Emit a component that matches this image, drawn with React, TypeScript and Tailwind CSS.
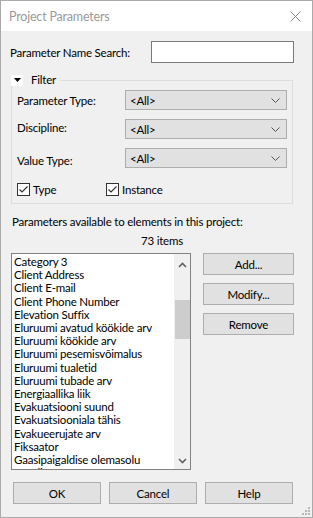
import React from "react";

const items = [
  "Category 3",
  "Client Address",
  "Client E-mail",
  "Client Phone Number",
  "Elevation Suffix",
  "Eluruumi avatud köökide arv",
  "Eluruumi köökide arv",
  "Eluruumi pesemisvõimalus",
  "Eluruumi tualetid",
  "Eluruumi tubade arv",
  "Energiaallika liik",
  "Evakuatsiooni suund",
  "Evakuatsiooniala tähis",
  "Evakueerujate arv",
  "Fiksaator",
  "Gaasipaigaldise olemasolu",
  "Heading",
];

function Chevron() {
  return (
    <svg width="9" height="5" viewBox="0 0 9 5" className="mr-[6px]">
      <path d="M0.5 0.5 L4.5 4.5 L8.5 0.5" fill="none" stroke="#555" strokeWidth="1" />
    </svg>
  );
}

function SelectBox() {
  return (
    <div className="w-[162px] h-[20px] bg-[#e1e1e1] border border-[#adadad] flex items-center justify-between pl-[4px]">
      <span>&lt;All&gt;</span>
      <Chevron />
    </div>
  );
}

function CheckBox({ label }: { label: string }) {
  return (
    <div className="flex items-center gap-[3px] h-[13px]">
      <div className="w-[13px] h-[13px] border border-[#333] bg-white flex items-center justify-center">
        <svg width="11" height="11" viewBox="0 0 11 11">
          <path d="M1.5 5.5 L4 8 L9.5 2.5" fill="none" stroke="#333" strokeWidth="1.2" />
        </svg>
      </div>
      <span>{label}</span>
    </div>
  );
}

function Btn({ label, w }: { label: string; w: string }) {
  return (
    <div className={`${w} h-[22px] shrink-0 bg-[#e1e1e1] border border-[#adadad] flex items-center justify-center`}>
      {label}
    </div>
  );
}

export default function App() {
  return (
    <div
      className="w-[313px] h-[518px] border border-t-0 border-[#aaaaaa] bg-[#f0f0f0] text-[11.5px] tracking-[-0.2px] leading-[15px] text-black flex flex-col overflow-hidden"
      style={{ fontFamily: 'Lato, "Liberation Sans", sans-serif' }}
    >
      {/* title bar */}
      <div className="h-[31px] shrink-0 bg-white flex items-center justify-between pl-[8px] pr-[11px] border-t border-[#aaaaaa]">
        <span className="text-[12.5px] text-[#9a9a9a]">Project Parameters</span>
        <svg width="11" height="11" viewBox="0 0 11 11">
          <path d="M0.5 0.5 L10.5 10.5 M10.5 0.5 L0.5 10.5" stroke="#8a8a8a" strokeWidth="1" />
        </svg>
      </div>

      <div className="flex flex-col pl-[9px] pr-[18px] shrink-0">
        {/* search row */}
        <div className="flex items-center justify-between mt-[10px] h-[22px]">
          <span>Parameter Name Search:</span>
          <div className="w-[143px] h-[22px] bg-white border border-[#7a7a7a]" />
        </div>

        {/* filter group */}
        <fieldset className="border border-[#dcdcdc] mt-[11px] ml-[1px] mr-[1px] px-[5px] pb-[7px]">
          <legend className="flex items-center gap-[8px] pr-[4px] ml-[-6px] h-[12px] leading-[12px] bg-[#f0f0f0]">
            <span className="w-[12px] h-[11px] bg-white flex items-center justify-center">
              <svg width="7" height="4" viewBox="0 0 7 4">
                <path d="M0 0 L7 0 L3.5 4 Z" fill="#000" />
              </svg>
            </span>
            <span>Filter</span>
          </legend>
          <div className="flex flex-col gap-[9px] mt-[4px]">
            <div className="flex items-center justify-between h-[20px]">
              <span>Parameter Type:</span>
              <SelectBox />
            </div>
            <div className="flex items-center justify-between h-[20px]">
              <span className="mb-[3px]">Discipline:</span>
              <SelectBox />
            </div>
            <div className="flex items-center justify-between h-[20px]">
              <span className="mt-[4px]">Value Type:</span>
              <SelectBox />
            </div>
          </div>
          <div className="flex mt-[15px]">
            <div className="w-[89px]">
              <CheckBox label="Type" />
            </div>
            <CheckBox label="Instance" />
          </div>
        </fieldset>

        <div className="mt-[10px] ml-[2px]">Parameters available to elements in this project:</div>
        <div className="mt-[4px] text-center pl-[20px]">73 items</div>

        {/* list + side buttons */}
        <div className="flex mt-[5px] ml-[1px]">
          <div className="w-[180px] h-[217px] bg-white border border-[#828282] flex overflow-hidden">
            <div className="flex-1 pl-[2px] pt-[1px] leading-[13.2px] overflow-hidden">
              {items.map((it) => (
                <div key={it} className="whitespace-nowrap">
                  {it}
                </div>
              ))}
            </div>
            <div className="w-[16px] bg-[#f0f0f0] flex flex-col items-center">
              <svg width="9" height="6" viewBox="0 0 9 6" className="mt-[8px]">
                <path d="M1 5 L4.5 1.5 L8 5" fill="none" stroke="#606060" strokeWidth="1.6" />
              </svg>
              <div className="w-[15px] h-[39px] bg-[#cdcdcd] mt-[32px]" />
              <div className="flex-1" />
              <svg width="9" height="6" viewBox="0 0 9 6" className="mb-[5px]">
                <path d="M1 1 L4.5 4.5 L8 1" fill="none" stroke="#606060" strokeWidth="1.6" />
              </svg>
            </div>
          </div>
          <div className="flex flex-col gap-[8px] ml-[12px]">
            <Btn label="Add..." w="w-[91px]" />
            <Btn label="Modify..." w="w-[91px]" />
            <Btn label="Remove" w="w-[91px]" />
          </div>
        </div>

        {/* bottom buttons */}
        <div className="flex gap-[8px] mt-[12px] ml-[3px]">
          <Btn label="OK" w="w-[88px]" />
          <Btn label="Cancel" w="w-[88px]" />
          <Btn label="Help" w="w-[88px]" />
        </div>
      </div>

      <div className="flex-1" />

      {/* size grip */}
      <div className="flex justify-end pr-[2px] pb-[2px] shrink-0">
        <svg width="8" height="8" viewBox="0 0 8 8">
          <rect x="6" y="0" width="2" height="2" fill="#b8b8b8" />
          <rect x="3" y="3" width="2" height="2" fill="#b8b8b8" />
          <rect x="6" y="3" width="2" height="2" fill="#b8b8b8" />
          <rect x="0" y="6" width="2" height="2" fill="#b8b8b8" />
          <rect x="3" y="6" width="2" height="2" fill="#b8b8b8" />
          <rect x="6" y="6" width="2" height="2" fill="#b8b8b8" />
        </svg>
      </div>
    </div>
  );
}
